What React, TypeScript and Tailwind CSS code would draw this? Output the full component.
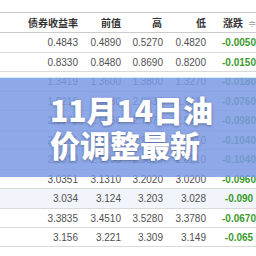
const rows = [
  ['0.4843', '0.4890', '0.5270', '0.4820', '-0.0050', 20],
  ['0.8330', '0.8480', '0.8690', '0.8200', '-0.0150', 19],
  ['1.3419', '1.3600', '1.3800', '1.3270', '-0.0180', 20],
  ['1.9219', '1.9980', '2.0330', '1.9110', '-0.0760', 19],
  ['2.5979', '2.6960', '2.7575', '2.5860', '-0.0980', 20],
  ['2.7921', '2.8960', '2.9330', '2.7810', '-0.1040', 19],
  ['2.8310', '2.9350', '2.9820', '2.8210', '-0.1040', 20],
  ['3.0351', '3.1310', '3.2020', '3.0200', '-0.0960', 19],
  ['3.034', '3.124', '3.203', '3.028', '-0.090', 20],
  ['3.3835', '3.4510', '3.5280', '3.3780', '-0.0670', 19],
  ['3.156', '3.221', '3.309', '3.149', '-0.065', 19],
] as const;

const grid = 'grid grid-cols-[80px_43px_42px_43px_62px] items-center';

export default function App() {
  return (
    <div className="relative w-[256px] h-[256px] overflow-hidden bg-white font-['Liberation_Sans','Noto_Sans_CJK_SC',sans-serif]">
      <div className="pt-[12px] w-[270px]">
        {/* Header */}
        <div className={`${grid} h-[21px] border-y border-[#cccccc] text-[10px] text-[#333] font-semibold font-['Noto_Sans_CJK_SC',sans-serif]`}>
          <span className="text-right pr-[2px]">债券收益率</span>
          <span className="text-right pr-[2px]">前值</span>
          <span className="text-right pr-[3px]">高</span>
          <span className="text-right pr-[2px]">低</span>
          <span className="text-center pl-[1px]">
            涨跌<span className="ml-[5px] text-[#aaa] font-normal">≑</span>
          </span>
        </div>

        {/* Rows */}
        {rows.map(([a, b, c, d, e, h], i) => (
          <div
            key={i}
            className={`${grid} border-b border-[#d9d9d9] text-[10px] text-[#505050] ${i === 8 ? 'bg-[#f1f4fa]' : 'bg-white'}`}
            style={{ height: h }}
          >
            <span className="text-right pr-[2px]">{a}</span>
            <span className="text-right pr-[2px]">{b}</span>
            <span className="text-right pr-[2px]">{c}</span>
            <span className="text-right pr-[2px]">{d}</span>
            <span className="text-center font-semibold text-[#3b9b2b]">{e}</span>
          </div>
        ))}
      </div>

      {/* Blue overlay band */}
      <div className="absolute left-0 right-0 top-[77px] h-[100px] border-t border-[#cdeef2] bg-[#7b9ae4]/[0.86]" />

      {/* Title */}
      <div className="absolute left-[50px] top-[92px] text-[30px] leading-[35px] font-black text-white font-['Noto_Sans_CJK_SC',sans-serif] [text-shadow:0_1px_3px_rgba(0,0,0,0.35)]">
        <div>11月14日油</div>
        <div>价调整最新</div>
      </div>
    </div>
  );
}
